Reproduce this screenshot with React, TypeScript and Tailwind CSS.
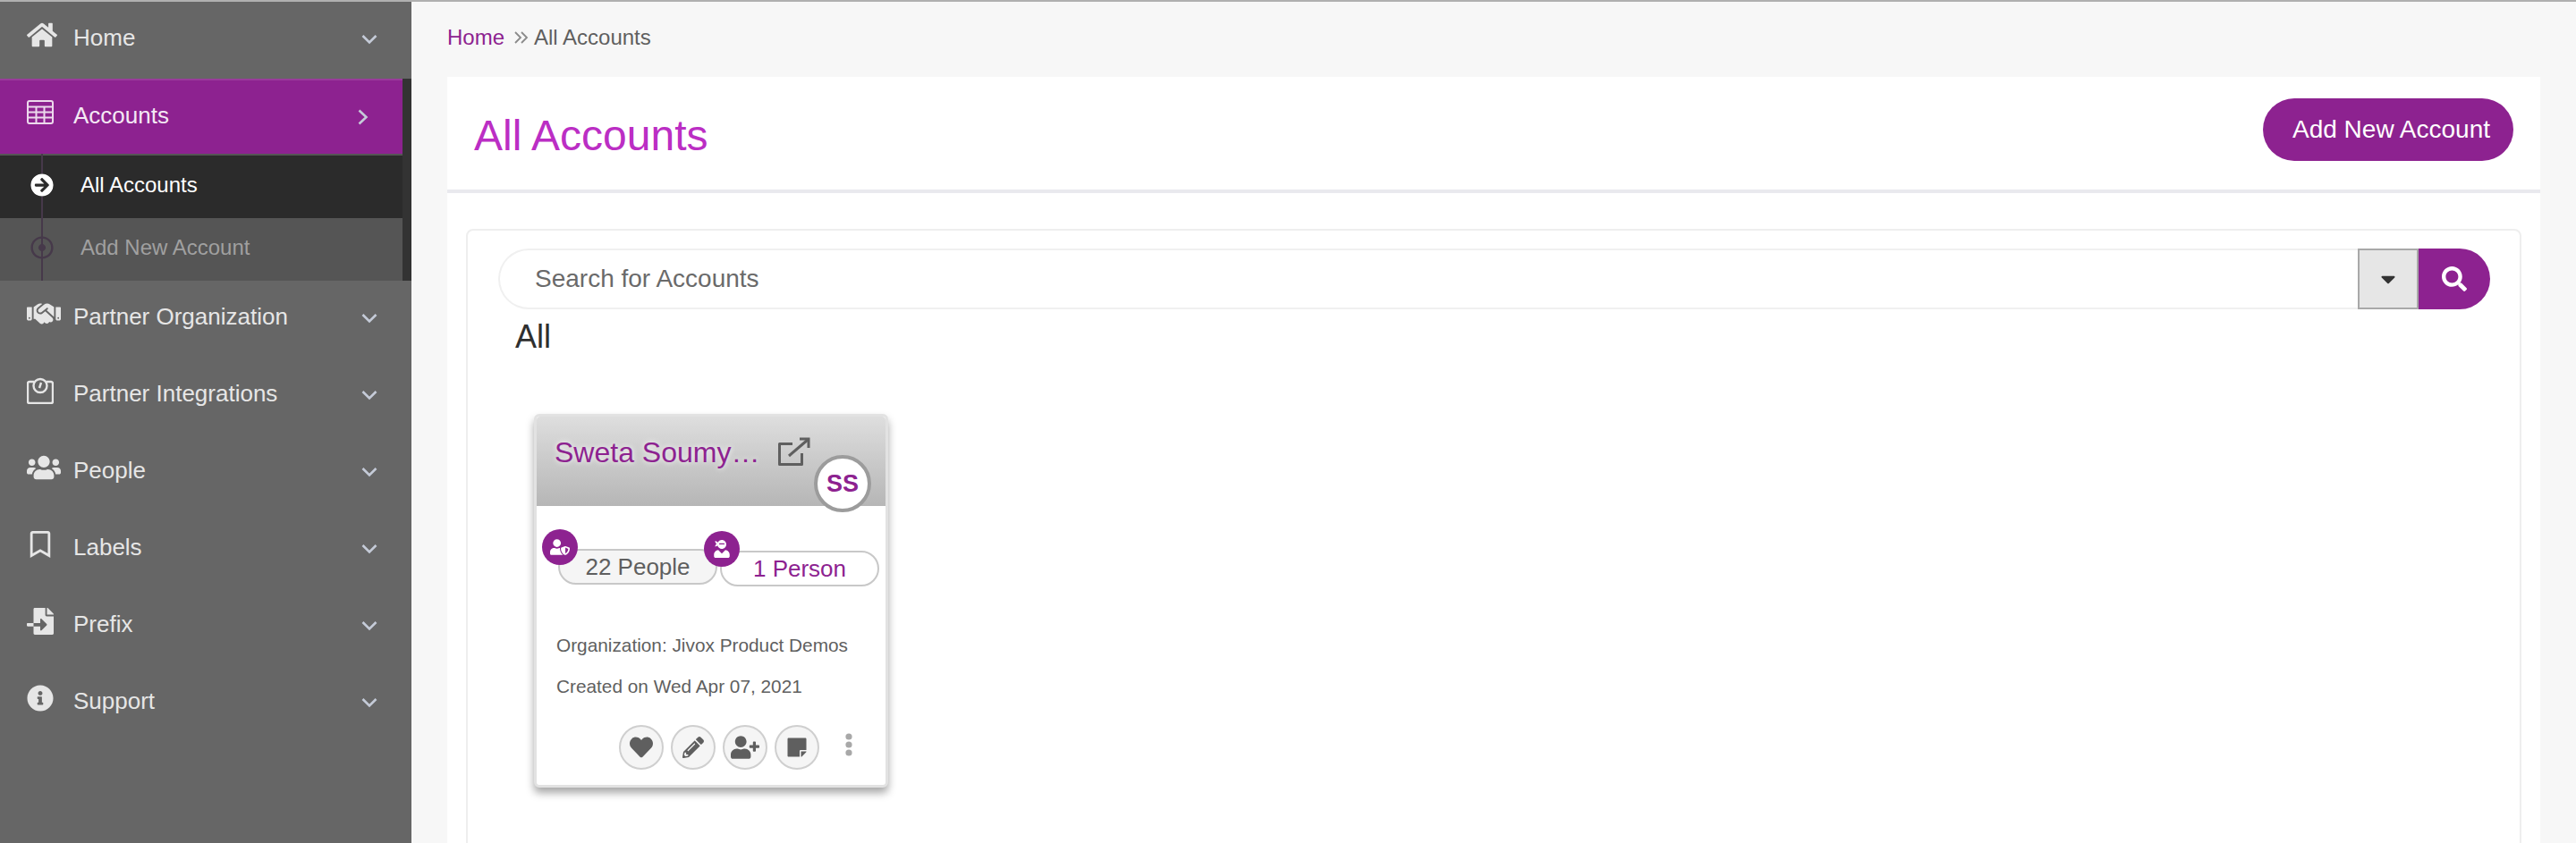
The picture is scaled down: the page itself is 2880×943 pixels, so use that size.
import React from "react";
import {
  FaArrowCircleRight,
  FaCaretDown,
  FaFileImport,
  FaHeart,
  FaHome,
  FaInfoCircle,
  FaPencilAlt,
  FaRegBookmark,
  FaRegDotCircle,
  FaSearch,
  FaStickyNote,
  FaUserNinja,
  FaUserPlus,
  FaUserShield,
  FaUsers,
} from "react-icons/fa";
import { FaHandshake } from "react-icons/fa6";

const Chevron = () => (
  <svg viewBox="0 0 18 12" className="w-[18px] h-[12px]" fill="none">
    <path d="M1.5 2 L9 9.5 L16.5 2" stroke="#c5cbd8" strokeWidth="2.6" />
  </svg>
);

const TableIcon = () => (
  <svg viewBox="0 0 30 27" className="w-[30px] h-[27px]" fill="none" stroke="#ecd9ec" strokeWidth="2">
    <rect x="1" y="1" width="28" height="25" rx="2" />
    <path d="M1 7.5H29M1 13.5H29M1 19.5H29M10.5 7.5V26M19.5 7.5V26" />
  </svg>
);

const ScaleIcon = () => (
  <svg viewBox="0 0 30 30" className="w-[30px] h-[30px]" fill="none" stroke="#e6e6e6" strokeWidth="2.4">
    <path d="M8 5H3a2 2 0 0 0-2 2v20a2 2 0 0 0 2 2h24a2 2 0 0 0 2-2V7a2 2 0 0 0-2-2h-5" />
    <circle cx="15" cy="9.5" r="7.5" />
    <path d="M14 12L16 6" />
  </svg>
);

const MenuRow = ({ icon, label }: { icon: React.ReactNode; label: string }) => (
  <div className="h-[86px] flex items-center relative pb-[5px]">
    <div className="w-[82px] pl-[30px] shrink-0 text-[#e6e6e6] -mt-[8px]">{icon}</div>
    <span className="text-[26px] text-[#e6e6e6]">{label}</span>
    <div className="absolute left-[404px] top-[36px]">
      <Chevron />
    </div>
  </div>
);

const Pill = ({ icon, text, purple }: { icon: React.ReactNode; text: string; purple?: boolean }) => (
  <div
    className={`relative w-[178px] h-[40px] rounded-full border-2 border-[#c8c8c8] flex items-center justify-center text-[26px] pt-[1px] ${
      purple ? "bg-white text-[#8d2290]" : "bg-[#f5f5f5] text-[#5f5f5f]"
    }`}
  >
    <div className="absolute left-[-20px] top-[-24px] w-[40px] h-[40px] rounded-full bg-[#8d2290] flex items-center justify-center text-white">
      {icon}
    </div>
    {text}
  </div>
);

const ActionBtn = ({ children }: { children: React.ReactNode }) => (
  <div className="w-[50px] h-[50px] rounded-full border-2 border-[#cfcfcf] bg-[#f5f5f5] flex items-center justify-center text-[#5f5f5f]">
    {children}
  </div>
);

export default function App() {
  return (
    <div className="w-[2880px] h-[943px] overflow-hidden bg-[#f7f7f7] font-['Liberation_Sans',Arial,sans-serif] flex flex-col">
      <div className="h-[2px] bg-[#b0b0b0] shrink-0" />
      <div className="flex flex-1 min-h-0">
        <aside className="w-[460px] shrink-0 bg-[#666666]">
          <MenuRow icon={<FaHome size={34} />} label="Home" />
          <div className="flex">
            <div className="w-[450px]">
              <div className="h-[84px] bg-[#8d2290] border-t-2 border-[#9a3a9c] flex items-center relative pb-[4px]">
                <div className="w-[82px] pl-[30px] shrink-0 -mt-[8px]">
                  <TableIcon />
                </div>
                <span className="text-[26px] text-[#f4e8f4]">Accounts</span>
                <svg viewBox="0 0 12 18" className="absolute left-[400px] top-[32px] w-[12px] h-[18px]" fill="none">
                  <path d="M1.5 1.5 L9.5 9 L1.5 16.5" stroke="#c5cbd8" strokeWidth="2.6" />
                </svg>
              </div>
              <div className="relative">
                <div className="h-[2px] bg-[#555555]" />
                <div className="h-[70px] bg-[#2b2b2b] flex items-center pb-[4px]">
                  <div className="w-[90px] pl-[34px] shrink-0 relative z-10 text-white">
                    <FaArrowCircleRight size={26} className="bg-[#2b2b2b] rounded-full" />
                  </div>
                  <span className="text-[24px] text-white">All Accounts</span>
                </div>
                <div className="h-[70px] bg-[#555555] flex items-center pb-[4px]">
                  <div className="w-[90px] pl-[34px] shrink-0 relative z-10 text-[#46394a]">
                    <FaRegDotCircle size={26} />
                  </div>
                  <span className="text-[24px] text-[#a0a0a0]">Add New Account</span>
                </div>
                <div className="absolute left-[46px] top-0 bottom-0 w-[2px] bg-[#46394a]" />
              </div>
            </div>
            <div className="w-[10px] bg-[#333333]" />
          </div>
          <MenuRow icon={<FaHandshake size={38} />} label="Partner Organization" />
          <MenuRow icon={<ScaleIcon />} label="Partner Integrations" />
          <MenuRow icon={<FaUsers size={38} />} label="People" />
          <MenuRow icon={<FaRegBookmark size={30} />} label="Labels" />
          <MenuRow icon={<FaFileImport size={30} />} label="Prefix" />
          <MenuRow icon={<FaInfoCircle size={30} />} label="Support" />
        </aside>

        <main className="flex-1 min-w-0 pl-[40px] pr-[40px]">
          <div className="h-[84px] flex items-center text-[24px] text-[#5f5f5f] pb-[5px]">
            <span className="text-[#8d2290]">Home</span>
            <svg viewBox="0 0 16 14" className="w-[16px] h-[14px] ml-[11px] mr-[6px]" fill="none" stroke="#8a8a8a" strokeWidth="1.8">
              <path d="M1 1L7 7L1 13M8 1L14 7L8 13" />
            </svg>
            <span>All Accounts</span>
          </div>
          <div className="bg-white h-[900px]">
            <div className="h-[130px] border-b-4 border-[#e9e9ee] flex items-start justify-between pl-[30px] pr-[30px]">
              <h1 className="text-[48px] text-[#bb2ec4] mt-[36px] leading-[60px]">All Accounts</h1>
              <button className="mt-[24px] w-[280px] h-[70px] rounded-full bg-[#8d2290] text-white text-[28px] text-left pl-[33px]">
                Add New Account
              </button>
            </div>
            <div className="mx-[21px] mt-[40px] h-[800px] rounded-[8px] border-2 border-[#eeeeee] bg-white pt-[20px] pl-[34px] pr-[33px]">
              <div className="flex h-[68px]">
                <div className="flex-1 border-2 border-r-0 border-[#f0f0f0] rounded-l-full flex items-center pl-[39px] text-[28px] text-[#6a6a6a]">
                  Search for Accounts
                </div>
                <div className="w-[68px] bg-[#e6e6e6] border-2 border-[#a8a8a8] flex items-center justify-center text-[#333333]">
                  <FaCaretDown size={26} />
                </div>
                <div className="w-[80px] bg-[#8d2290] rounded-r-full flex items-center justify-center text-white">
                  <FaSearch size={28} />
                </div>
              </div>
              <div className="text-[36px] text-[#2f2f2f] pl-[19px] mt-[11px] leading-[40px]">All</div>

              <div className="mt-[66px] ml-[40px] w-[396px] h-[418px] rounded-[6px] bg-white border-[3px] border-[#e2e2e2] shadow-[0_6px_10px_rgba(0,0,0,0.35)]">
                <div className="relative h-[100px] bg-gradient-to-b from-[#dedede] to-[#b6b6b6] rounded-t-[4px]">
                  <div className="pl-[20px] pt-[20px] text-[32px] leading-[40px] text-[#8d2290] [text-shadow:0_0_6px_#ffffff]">
                    Sweta Soumy…
                  </div>
                  <svg viewBox="0 0 36 32" className="absolute left-[270px] top-[23px] w-[36px] h-[32px]" fill="none" stroke="#5f5f5f" strokeWidth="3">
                    <path d="M16 7.5H1.5v23h25V18" strokeLinejoin="round" />
                    <path d="M12 21L33 3" />
                    <path d="M24 2h10v10" />
                  </svg>
                  <div className="absolute left-[310px] top-[43px] w-[64px] h-[64px] rounded-full bg-white border-[4px] border-[#9c9c9c] flex items-center justify-center text-[27px] font-bold text-[#8d2290]">
                    SS
                  </div>
                </div>
                <div className="flex pl-[24px] gap-[3px] mt-[48px]">
                  <Pill icon={<FaUserShield size={22} />} text="22 People" />
                  <div className="mt-[2px]">
                    <Pill icon={<FaUserNinja size={20} />} text="1 Person" purple />
                  </div>
                </div>
                <div className="pl-[22px] mt-[54px] text-[20.8px] text-[#5f5f5f] leading-[24px]">Organization: Jivox Product Demos</div>
                <div className="pl-[22px] mt-[22px] text-[20.8px] text-[#5f5f5f] leading-[24px]">Created on Wed Apr 07, 2021</div>
                <div className="flex items-center pl-[92px] gap-[8px] mt-[31px]">
                  <ActionBtn><FaHeart size={26} /></ActionBtn>
                  <ActionBtn><FaPencilAlt size={24} /></ActionBtn>
                  <ActionBtn><FaUserPlus size={32} /></ActionBtn>
                  <ActionBtn><FaStickyNote size={24} /></ActionBtn>
                  <svg viewBox="0 0 8 26" className="ml-[21px] -mt-[6px] w-[8px] h-[26px]" fill="#a8a8a8">
                    <circle cx="4" cy="4" r="3.6" />
                    <circle cx="4" cy="13" r="3.6" />
                    <circle cx="4" cy="22" r="3.6" />
                  </svg>
                </div>
              </div>
            </div>
          </div>
        </main>
      </div>
    </div>
  );
}
